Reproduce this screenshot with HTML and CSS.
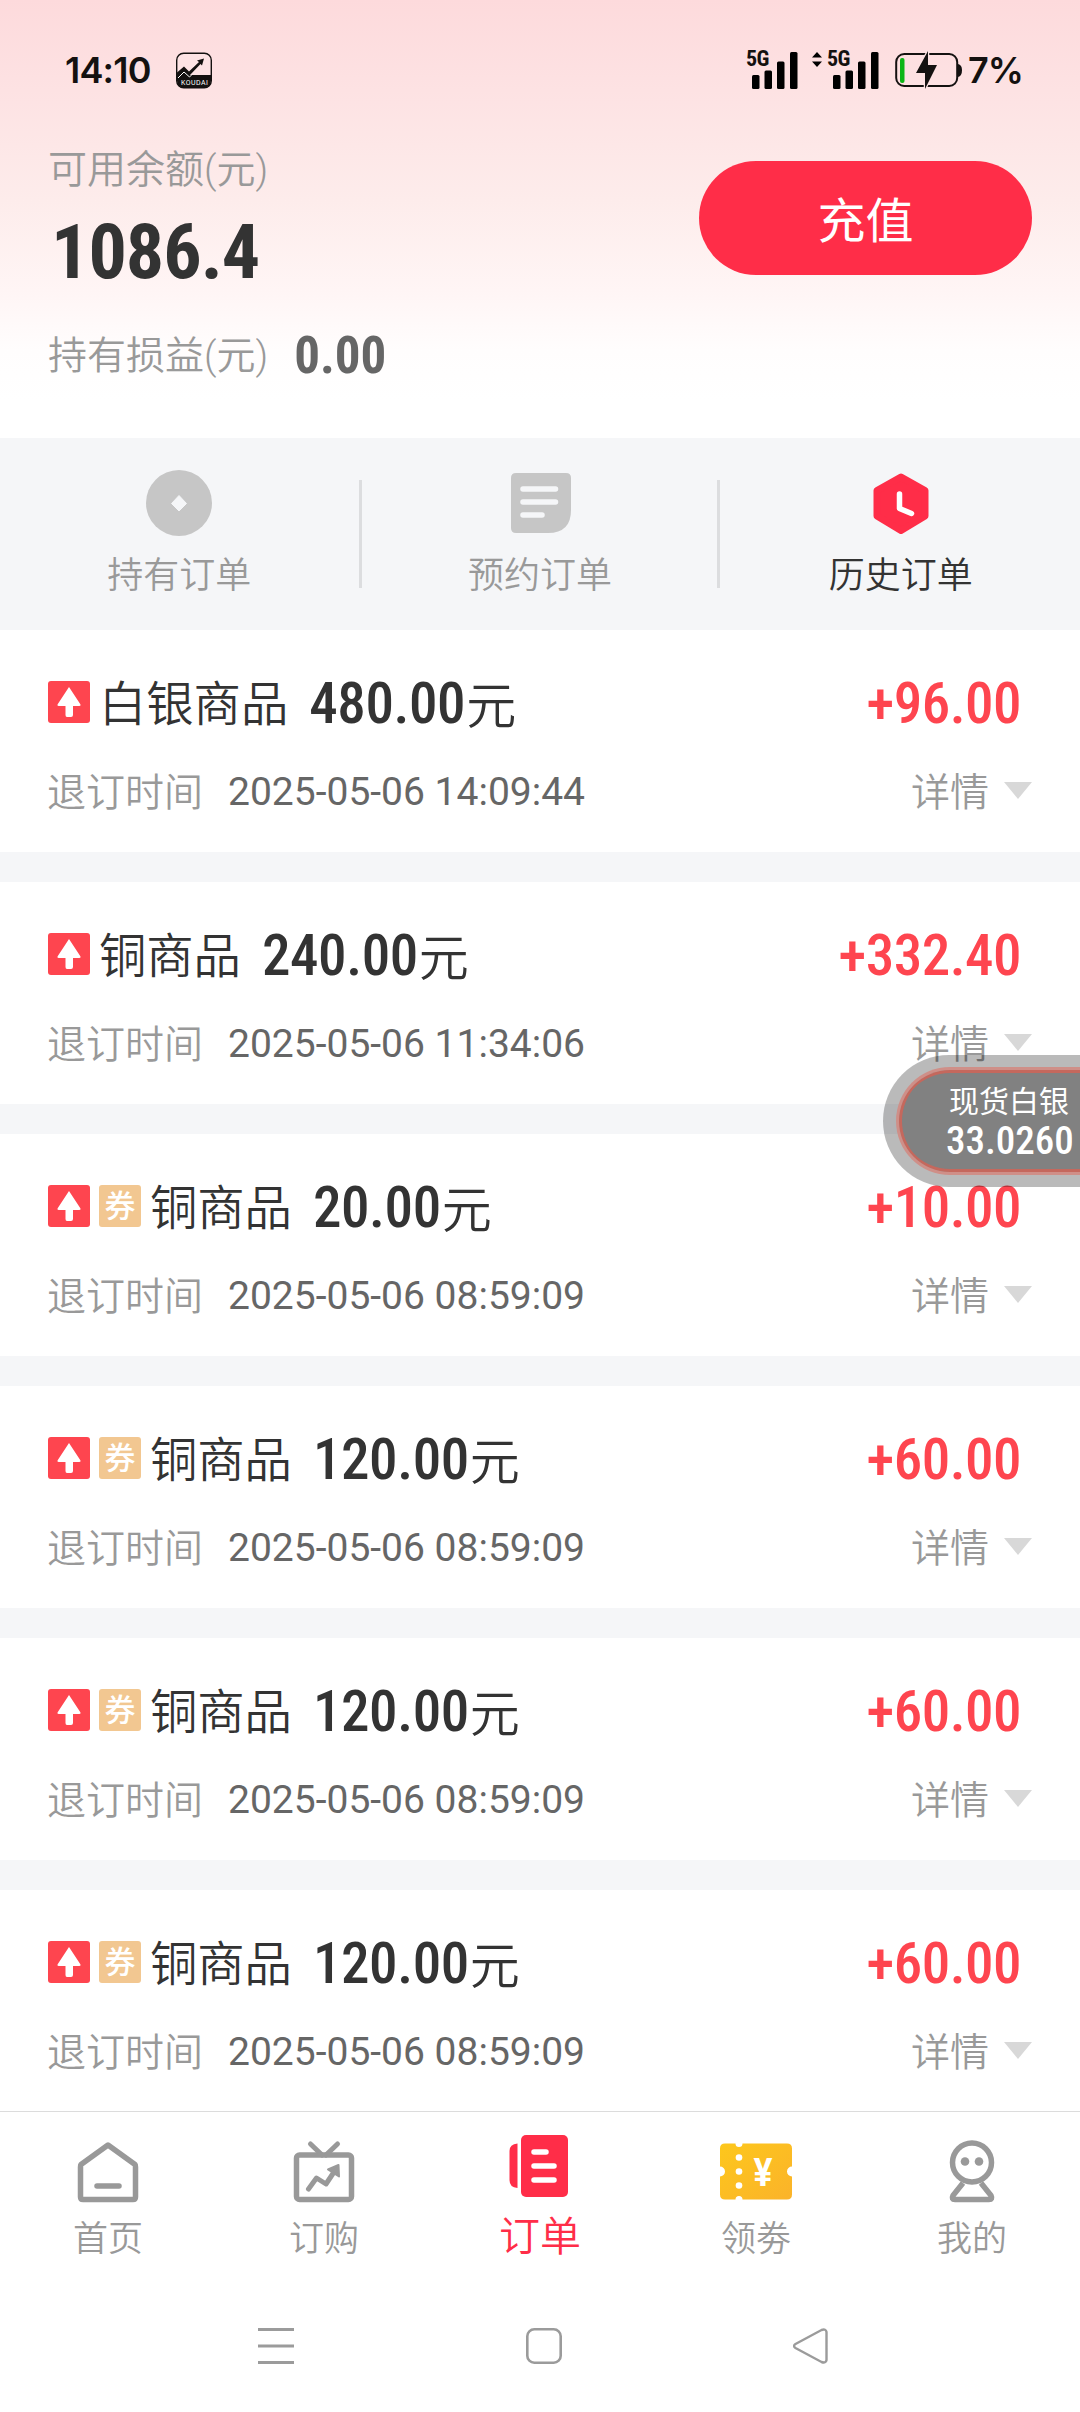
FILE: index.html
```html
<!DOCTYPE html>
<html lang="zh-CN">
<head>
    <meta charset="UTF-8">
    <title>历史订单</title>
    <link rel="stylesheet" href="styles.css">
</head>
<body>
    <svg class="defs">
        <symbol id="up" viewBox="0 0 42 42">
            <rect width="42" height="42" rx="3" fill="#fe454f"/>
            <path d="M21 6 L32.5 23.5 Q33 25 31 25 H25 V34 Q25 36 23 36 H19 Q17.500 36 17.500 34 V25 H11 Q9 25 9.500 23.500 Z" fill="#fff"/>
        </symbol>
        <symbol id="bars" viewBox="0 0 46 37">
            <rect x="0" y="23" width="7.500" height="14" rx="1.500"/>
            <rect x="12.500" y="18.500" width="7.500" height="18.500" rx="1.500"/>
            <rect x="25" y="9.500" width="7.500" height="27.500" rx="1.500"/>
            <rect x="38" y="0" width="7.500" height="37" rx="1.500"/>
        </symbol>
    </svg>

    <div class="page">
        <div class="header">
            <div class="status">
                <span class="time">14:10</span>
                <svg class="app-icon" viewBox="0 0 36 36">
                    <rect x="0.700" y="0.700" width="34.600" height="34.600" rx="7" fill="#fde3e4" stroke="#141110" stroke-width="1.400"/>
                    <path d="M1 20 L8 14 L13 19 L23 9.500 L21 8 L28 6 L26 13 L24.500 11.500 L14 22.500 H35 V28 Q35 35 28 35 H8 Q1 35 1 28 Z" fill="#141110"/>
                    <path d="M2 25.500 L8 19.500 L13.500 24.500 L15.500 22.500" fill="none" stroke="#fff" stroke-width="1"/>
                    <text x="5" y="32.500" class="app-name" textLength="27">KOUDAI</text>
                </svg>
                <div class="status-right">
                    <div class="signal"><span class="net">5G</span><svg class="bars"><use href="#bars"/></svg></div>
                    <div class="signal second">
                        <svg class="updown" viewBox="0 0 10 15"><path d="M5 0 L10 5.500 H0 Z M5 15 L10 9.500 H0 Z"/></svg>
                        <span class="net">5G</span><svg class="bars"><use href="#bars"/></svg>
                    </div>
                    <svg class="battery" viewBox="0 0 68 38">
                        <rect x="1.200" y="3" width="61" height="32" rx="8" fill="none" stroke="#141110" stroke-width="2"/>
                        <path d="M63 13 Q67 14 67 19 Q67 25 63 26 Z" fill="#141110"/>
                        <rect x="5" y="7" width="4.500" height="25" rx="2" fill="#0cb516"/>
                        <path d="M33 0 L21 22 H30 V38 L42 14 H33 Z" fill="#141110" stroke="#fde1e2" stroke-width="2.500" paint-order="stroke"/>
                    </svg>
                    <span class="percent">7%</span>
                </div>
            </div>
            <div class="balance">
                <div class="balance-info">
                    <div class="label">可用余额(元)</div>
                    <div class="money">1086.4</div>
                    <div class="profit-row"><span class="label">持有损益(元)</span><span class="profit">0.00</span></div>
                </div>
                <button class="recharge">充值</button>
            </div>
        </div>

        <div class="tabs">
            <div class="tab">
                <svg width="66" height="66" viewBox="0 0 66 66"><circle cx="33" cy="33" r="33" fill="#c6c6c6"/><path d="M33 25.500 L40.500 33.500 L33 41 L25.500 33.500 Z" fill="#f5f6f8" stroke="#f5f6f8" stroke-linejoin="round"/></svg>
                <span>持有订单</span>
            </div>
            <div class="tab">
                <svg width="66" height="66" viewBox="0 0 66 66"><path d="M9 3 H59 Q64 3 64 8 V40 Q64 63 41 63 H9 Q4 63 4 58 V8 Q4 3 9 3 Z" fill="#c6c6c6"/><path d="M16 19 H48.500 M16 32 H48.500 M16 45 H35" stroke="#f5f6f8" stroke-width="5.500" stroke-linecap="round"/></svg>
                <span>预约订单</span>
            </div>
            <div class="tab active">
                <svg width="66" height="66" viewBox="0 0 66 66"><path d="M33 7 L57 20.500 V46 L33 60.500 L9 46 V20.500 Z" fill="#ff2d48" stroke="#ff2d48" stroke-width="7" stroke-linejoin="round"/><path d="M31.500 24 V38.500 L43.500 43.500" fill="none" stroke="#fff" stroke-width="5.500" stroke-linecap="round" stroke-linejoin="round"/></svg>
                <span>历史订单</span>
            </div>
        </div>

        <div class="orders">
            <div class="order">
                <div class="row">
                    <svg class="up"><use href="#up"/></svg><span class="name">白银商品</span>
                    <span class="amount">480.00</span><span class="unit">元</span><span class="gain">+96.00</span>
                </div>
                <div class="row sub"><span class="label">退订时间</span><span class="date">2025-05-06 14:09:44</span><span class="detail">详情</span><i class="arrow"></i></div>
            </div>
            <div class="order">
                <div class="row">
                    <svg class="up"><use href="#up"/></svg><span class="name">铜商品</span>
                    <span class="amount">240.00</span><span class="unit">元</span><span class="gain">+332.40</span>
                </div>
                <div class="row sub"><span class="label">退订时间</span><span class="date">2025-05-06 11:34:06</span><span class="detail">详情</span><i class="arrow"></i></div>
            </div>
            <div class="order">
                <div class="row">
                    <svg class="up"><use href="#up"/></svg><span class="coupon">券</span><span class="name">铜商品</span>
                    <span class="amount">20.00</span><span class="unit">元</span><span class="gain">+10.00</span>
                </div>
                <div class="row sub"><span class="label">退订时间</span><span class="date">2025-05-06 08:59:09</span><span class="detail">详情</span><i class="arrow"></i></div>
            </div>
            <div class="order">
                <div class="row">
                    <svg class="up"><use href="#up"/></svg><span class="coupon">券</span><span class="name">铜商品</span>
                    <span class="amount">120.00</span><span class="unit">元</span><span class="gain">+60.00</span>
                </div>
                <div class="row sub"><span class="label">退订时间</span><span class="date">2025-05-06 08:59:09</span><span class="detail">详情</span><i class="arrow"></i></div>
            </div>
            <div class="order">
                <div class="row">
                    <svg class="up"><use href="#up"/></svg><span class="coupon">券</span><span class="name">铜商品</span>
                    <span class="amount">120.00</span><span class="unit">元</span><span class="gain">+60.00</span>
                </div>
                <div class="row sub"><span class="label">退订时间</span><span class="date">2025-05-06 08:59:09</span><span class="detail">详情</span><i class="arrow"></i></div>
            </div>
            <div class="order">
                <div class="row">
                    <svg class="up"><use href="#up"/></svg><span class="coupon">券</span><span class="name">铜商品</span>
                    <span class="amount">120.00</span><span class="unit">元</span><span class="gain">+60.00</span>
                </div>
                <div class="row sub"><span class="label">退订时间</span><span class="date">2025-05-06 08:59:09</span><span class="detail">详情</span><i class="arrow"></i></div>
            </div>
        </div>

        <div class="nav">
            <div class="nav-item">
                <svg width="72" height="66" viewBox="0 0 72 66" fill="none" stroke="#999" stroke-width="5.500" stroke-linecap="round" stroke-linejoin="round"><path d="M36 6 L63 25.500 Q63.500 26 63.500 28 V58 Q63.500 60.500 61 60.500 H11 Q8.500 60.500 8.500 58 V28 Q8.500 26 9 25.500 Z"/><path d="M25 47 H47"/></svg>
                <span>首页</span>
            </div>
            <div class="nav-item">
                <svg width="72" height="66" viewBox="0 0 72 66" fill="none" stroke="#999" stroke-width="5.500" stroke-linecap="round" stroke-linejoin="round"><rect x="8.500" y="16" width="55" height="44.500" rx="3"/><path d="M22.500 5 L34 16 M49.500 5 L38 16" stroke-width="5"/><path d="M20.500 50 L28.500 39 L38 45 L46 33" stroke-width="5"/><path d="M40 30.500 L50.500 26 L51 37.500 Z" fill="#999" stroke-width="2"/></svg>
                <span>订购</span>
            </div>
            <div class="nav-item active">
                <svg width="72" height="66" viewBox="0 0 72 66"><path d="M13.500 9.500 V54 Q5.500 53.500 5.500 46 V17 Q5.500 10 13.500 9.500 Z" fill="#ff2d48"/><rect x="17" y="1" width="47" height="62" rx="5" fill="#ff2d48"/><path d="M30 18 H42 M30 32 H50 M30 46 H50" stroke="#fff" stroke-width="5.500" stroke-linecap="round"/></svg>
                <span>订单</span>
            </div>
            <div class="nav-item">
                <svg width="72" height="66" viewBox="0 0 72 66">
                    <linearGradient id="gold" x1="0" y1="0" x2="1" y2="1"><stop offset="0" stop-color="#fdc71c"/><stop offset="1" stop-color="#fbb32a"/></linearGradient>
                    <path d="M5 4.500 H15.500 A3.500 3.500 0 0 0 22.500 4.500 H67 Q72 4.500 72 9.500 V27.500 A5 5 0 0 0 72 37.500 V55.500 Q72 60.500 67 60.500 H22.500 A3.500 3.500 0 0 0 15.500 60.500 H5 Q0 60.500 0 55.500 V37.500 A5 5 0 0 0 0 27.500 V9.500 Q0 4.500 5 4.500 Z" fill="url(#gold)"/>
                    <circle cx="19" cy="18.500" r="3.300" fill="#fff"/><circle cx="19" cy="32.500" r="3.300" fill="#fff"/><circle cx="19" cy="46.500" r="3.300" fill="#fff"/>
                    <text x="43" y="46.500" class="yen" textLength="19" lengthAdjust="spacingAndGlyphs">¥</text>
                </svg>
                <span>领劵</span>
            </div>
            <div class="nav-item">
                <svg width="72" height="66" viewBox="0 0 72 66" fill="none" stroke="#999" stroke-width="5.500" stroke-linejoin="round"><circle cx="36" cy="23.500" r="19.500"/><path d="M27 44 L17 56.500 Q15 60.500 19 60.500 H53 Q57 60.500 55 56.500 L45 44"/><circle cx="29" cy="22.500" r="4.300" fill="#999" stroke="none"/><circle cx="43" cy="22.500" r="4.300" fill="#999" stroke="none"/></svg>
                <span>我的</span>
            </div>
        </div>

        <div class="system">
            <svg width="36" height="36" viewBox="0 0 36 36"><path d="M0 1.500 H36 M0 18 H36 M0 34.500 H36" stroke="#9b9b9b" stroke-width="3"/></svg>
            <svg width="36" height="36" viewBox="0 0 36 36"><rect x="1.300" y="1.300" width="33.400" height="33.400" rx="7" fill="none" stroke="#9b9b9b" stroke-width="2.600"/></svg>
            <svg width="36" height="36" viewBox="0 0 36 36"><path d="M2.500 16 L28.500 2 Q33 0.500 33.500 4 V32 Q33 35.500 28.500 34 L2.500 20 Q-0.500 18 2.500 16 Z" fill="none" stroke="#9b9b9b" stroke-width="2.400"/></svg>
        </div>
    </div>

    <div class="float">
        <div class="float-inner">
            <span class="float-name">现货白银</span>
            <span class="float-price">33.0260</span>
        </div>
    </div>
</body>
</html>
```
FILE: styles.css
```css
* {
    box-sizing: border-box;
}
body {
    margin: 0;
    width: 1080px;
    height: 2412px;
    position: relative;
    overflow: hidden;
    background-color: #fff;
    font-family: Roboto, "Noto Sans CJK SC", sans-serif;
    font-weight: 350;
    color: #333;
}
svg {
    display: block;
    flex: none;
}
span {
    white-space: nowrap;
}
.defs {
    display: none;
}
.page {
    height: 2412px;
    display: flex;
    flex-direction: column;
}
.label {
    font-size: 39px;
    color: #999;
}

/* header */
.header {
    height: 438px;
    background: linear-gradient(#fddadc 0, #fde2e3 90px, #fdeceb 200px, #fff5f5 290px, #fffdfd 350px, #fff 400px);
}
.status {
    height: 140px;
    padding: 0 58px 0 65px;
    display: flex;
    align-items: center;
    color: #141110;
}
.time {
    width: 111px;
    font: 600 36px Inter, sans-serif;
    letter-spacing: -0.8px;
}
.app-icon {
    width: 36px;
    height: 37px;
}
.app-name {
    font: 400 7px Roboto, sans-serif;
    fill: #fff;
}
.status-right {
    margin-left: auto;
    display: flex;
    align-items: center;
}
.signal {
    position: relative;
    width: 52px;
    height: 37px;
    display: flex;
    justify-content: flex-end;
}
.second {
    margin-left: 29px;
}
.bars {
    width: 46px;
    height: 37px;
}
.net {
    position: absolute;
    left: 0;
    top: -4px;
    font: 700 22px/22px Roboto, sans-serif;
    font-stretch: 87%;
    letter-spacing: -0.5px;
}
.updown {
    position: absolute;
    left: -15px;
    top: 0;
    width: 10px;
    height: 15px;
}
.battery {
    width: 68px;
    height: 38px;
    margin-left: 16px;
}
.percent {
    width: 54px;
    margin-left: 5px;
    font: 600 36px Inter, sans-serif;
    letter-spacing: -1px;
}
.balance {
    display: flex;
    justify-content: space-between;
    padding: 2px 48px 0;
}
.balance-info .label {
    line-height: 56px;
}
.money {
    height: 103px;
    padding-left: 3px;
    font-size: 76px;
    line-height: 108px;
    font-weight: 700;
    font-stretch: 87%;
    letter-spacing: -1px;
}
.profit-row {
    display: flex;
    align-items: center;
    margin-top: 27px;
}
.profit {
    margin-left: 26px;
    font-size: 51px;
    line-height: 56px;
    font-weight: 700;
    font-stretch: 87%;
    color: #666;
}
.recharge {
    width: 333px;
    height: 114px;
    margin-top: 19px;
    padding-bottom: 4px;
    border: none;
    border-radius: 57px;
    background-color: #ff2d48;
    color: #fff;
    font-family: "Noto Sans CJK SC", sans-serif;
    font-size: 48px;
    font-weight: 400;
}

/* order type tabs */
.tabs {
    height: 192px;
    display: flex;
    background-color: #f5f6f8;
}
.tab {
    position: relative;
    flex: 1;
    display: flex;
    flex-direction: column;
    align-items: center;
    padding-top: 32px;
    font-size: 36px;
    line-height: 40px;
    color: #999;
}
.tab:first-child {
    padding-right: 2px;
}
.tab:last-child {
    padding-left: 2px;
}
.tab span {
    margin-top: 20px;
}
.tab + .tab::before {
    content: "";
    position: absolute;
    left: -2px;
    top: 42px;
    width: 3px;
    height: 108px;
    background-color: #dcdddf;
}
.tab.active {
    color: #333;
}

/* order list */
.orders {
    height: 1481px;
    overflow: hidden;
    background-color: #f5f6f8;
}
.order {
    height: 222px;
    margin-bottom: 30px;
    padding: 42px 48px 0;
    background-color: #fff;
}
.row {
    display: flex;
    align-items: center;
    height: 60px;
}
.up {
    width: 42px;
    height: 42px;
}
.coupon {
    width: 42px;
    height: 42px;
    margin-left: 9px;
    border-radius: 3px;
    background-color: #f2c791;
    color: #fff;
    font-size: 31px;
    line-height: 44px;
    font-weight: 500;
    text-align: center;
}
.name {
    margin-left: 9px;
    margin-top: -3px;
    font-size: 47.3px;
}
.amount {
    margin-left: 21px;
    margin-top: 2px;
    font-size: 57px;
    font-weight: 500;
    font-stretch: 87%;
    letter-spacing: -0.4px;
}
.unit {
    margin-top: -1px;
    margin-left: 1px;
    font-size: 50px;
}
.gain {
    margin-left: auto;
    margin-top: 2px;
    margin-right: 11px;
    font-size: 57px;
    font-weight: 500;
    font-stretch: 87%;
    letter-spacing: -0.5px;
    color: #fe454f;
}
.sub {
    margin-top: 28px;
}
.sub .label,
.detail {
    margin-top: -3px;
}
.sub .label {
    margin-left: -1px;
}
.date {
    margin-left: 25px;
    margin-top: 3px;
    font-size: 39px;
    font-weight: 400;
    color: #666;
}
.detail {
    margin-left: auto;
    font-size: 39px;
    color: #999;
}
.arrow {
    margin-left: 15px;
    border: 14px solid transparent;
    border-top: 17px solid #d8d8d8;
    border-bottom: none;
}

/* bottom navigation */
.nav {
    height: 169px;
    display: flex;
    border-top: 1px solid #dcdcdc;
    background-color: #fff;
}
.nav-item {
    flex: 1;
    display: flex;
    flex-direction: column;
    align-items: center;
    padding-top: 27px;
    font-size: 35px;
    line-height: 40px;
    color: #999;
}
.nav-item span {
    margin-top: 15px;
}
.nav-item.active {
    padding-top: 22px;
    font-size: 41px;
    color: #ff2d48;
}
.nav-item.active span {
    margin-top: 17px;
}
.yen {
    font: 700 39px Roboto, sans-serif;
    fill: #fff;
    text-anchor: middle;
}
.system {
    display: flex;
    justify-content: space-between;
    padding: 48px 251px 0 258px;
}

/* floating quote */
.float {
    position: absolute;
    left: 883px;
    top: 1055px;
    width: 197px;
    height: 132px;
    padding: 12px 0 12px 13px;
    border-radius: 66px 0 0 66px;
    background-color: rgba(0, 0, 0, 0.27);
}
.float-inner {
    height: 108px;
    padding: 14px 0 0 47px;
    display: flex;
    flex-direction: column;
    border: 3px solid #cf8f88;
    border-right: none;
    border-radius: 54px 0 0 54px;
    background-color: #818181;
    box-shadow: inset 3px 0 0 #c5685d, inset 0 3px 0 #c5685d, inset 0 -3px 0 #c5685d;
    color: #fff;
}
.float-name {
    padding-left: 3px;
    font-size: 30px;
    line-height: 36px;
    font-weight: 400;
}
.float-price {
    font-size: 39px;
    line-height: 42px;
    font-weight: 500;
    font-stretch: 87%;
}
```
